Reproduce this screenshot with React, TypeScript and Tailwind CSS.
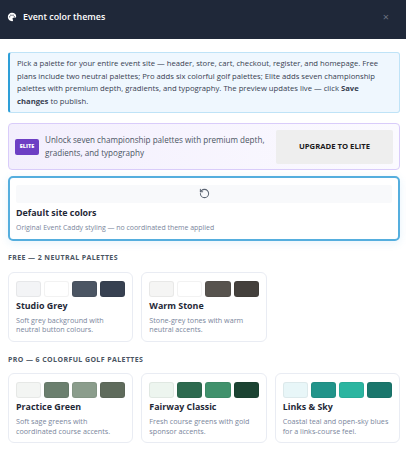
import React from "react";

const F = '[font-family:"Open_Sans","Noto_Sans",sans-serif]';

function Card({ name, desc, colors }: { name: string; desc: string; colors: string[] }) {
  return (
    <div className="h-[70px] rounded-[6px] border border-[#e9ecf3] bg-white px-[7px] pt-[8px]">
      <div className="grid grid-cols-4 gap-[3px]">
        {colors.map((c, i) => (
          <div key={i} className="h-[16px] rounded-[3px] border border-black/5" style={{ background: c }} />
        ))}
      </div>
      <div className="mt-[2px] text-[8.9px] leading-[14px] font-bold text-[#1f2937]">{name}</div>
      <div className="mt-[3px] text-[7.2px] leading-[9.6px] text-[#7a869c]">{desc}</div>
    </div>
  );
}

export default function App() {
  return (
    <div className={`w-[406px] h-[452px] overflow-hidden bg-white ${F}`}>
      <header className="h-[39px] bg-[#1f2839] flex items-center justify-between pl-[7px] pr-[17px] pb-[5px]">
        <div className="flex items-center gap-[6px]">
          <svg width="10" height="10" viewBox="0 0 24 24" fill="#fff">
            <path d="M12 2C6.5 2 2 6.5 2 12s4.5 10 10 10c1.4 0 2.5-1.1 2.5-2.5 0-.6-.2-1.2-.7-1.7-.4-.5-.6-1-.6-1.6 0-1.3 1-2.2 2.3-2.2H18c2.2 0 4-1.8 4-4C22 5.6 17.5 2 12 2zM6.5 13a1.5 1.5 0 1 1 0-3 1.5 1.5 0 0 1 0 3zm3-4a1.5 1.5 0 1 1 0-3 1.5 1.5 0 0 1 0 3zm5 0a1.5 1.5 0 1 1 0-3 1.5 1.5 0 0 1 0 3zm3 4a1.5 1.5 0 1 1 0-3 1.5 1.5 0 0 1 0 3z" />
          </svg>
          <span className="text-[8.9px] font-semibold text-white">Event color themes</span>
        </div>
        <span className="text-[11px] text-[#6b7280]">×</span>
      </header>
      <main className="pl-[8px] pr-[6px] pt-[12.5px]">
        <div className="rounded-[3px] border border-[#bfe3f7] border-l-[2px] border-l-[#2e9fd8] bg-[#eff7fe] pl-[7px] pr-[10px] py-[4.5px] text-[7.7px] leading-[12.7px] text-[#374151]">
          Pick a palette for your entire event site — header, store, cart, checkout, register, and homepage. Free plans include two neutral palettes; Pro adds six colorful golf palettes; Elite adds seven championship palettes with premium depth, gradients, and typography. The preview updates live — click <b>Save changes</b> to publish.
        </div>
        <div className="mt-[10px] h-[46.5px] rounded-[4px] border border-[#d9ccfa] bg-[linear-gradient(90deg,#f3effd,#fbfaff)] flex items-center px-[6px] gap-[6px]">
          <span className="w-[24px] h-[16px] shrink-0 rounded-[2px] bg-[#6d3fc4] text-white text-[5.5px] font-extrabold flex items-center justify-center">ELITE</span>
          <span className="flex-1 text-[8.1px] leading-[12.5px] text-[#4b5563]">Unlock seven championship palettes with premium depth, gradients, and typography</span>
          <span className="w-[117px] h-[34px] shrink-0 rounded-[2px] bg-[#eeeeee] text-[7.7px] font-bold text-[#1a1a1a] flex items-center justify-center">UPGRADE TO ELITE</span>
        </div>
        <div className="mt-[6.5px] h-[65px] rounded-[5px] border-2 border-[#55aede] bg-white px-[6px] pt-[6.5px] shadow-[0_2px_8px_rgba(56,160,220,0.12)]">
          <div className="h-[18px] rounded-[2px] bg-[#f8f9fb] flex items-center justify-center">
            <svg width="11" height="11" viewBox="0 0 24 24" fill="none" stroke="#5b6472" strokeWidth="2.2" strokeLinecap="round" strokeLinejoin="round">
              <path d="M3 12a9 9 0 1 0 9-9 9.75 9.75 0 0 0-6.74 2.74L3 8" />
              <path d="M3 3v5h5" />
            </svg>
          </div>
          <div className="mt-[3px] text-[8.9px] leading-[14px] font-bold text-[#1f2937]">Default site colors</div>
          <div className="mt-[3px] text-[6.95px] leading-[10px] text-[#7a869c]">Original Event Caddy styling — no coordinated theme applied</div>
        </div>
        <div className="mt-[12px] text-[7px] leading-[10px] font-bold tracking-[0.4px] text-[#4b5563]">FREE — 2 NEUTRAL PALETTES</div>
        <div className="mt-[8.4px] grid grid-cols-3 gap-[8px]">
          <Card name="Studio Grey" desc="Soft grey background with neutral button colours." colors={["#f3f4f6", "#ffffff", "#4b5563", "#374151"]} />
          <Card name="Warm Stone" desc="Stone-grey tones with warm neutral accents." colors={["#f5f5f4", "#ffffff", "#57534e", "#44403c"]} />
        </div>
        <div className="mt-[13.6px] text-[7px] leading-[10px] font-bold tracking-[0.4px] text-[#4b5563]">PRO — 6 COLORFUL GOLF PALETTES</div>
        <div className="mt-[8px] grid grid-cols-3 gap-[8px]">
          <Card name="Practice Green" desc="Soft sage greens with coordinated course accents." colors={["#f3f5f3", "#6b7f6e", "#8b9d8c", "#5f6b5c"]} />
          <Card name="Fairway Classic" desc="Fresh course greens with gold sponsor accents." colors={["#edf5ef", "#2d6a4f", "#40916c", "#1b4332"]} />
          <Card name="Links & Sky" desc="Coastal teal and open-sky blues for a links-course feel." colors={["#e8f6f8", "#21948a", "#2bb5a0", "#1a766c"]} />
        </div>
      </main>
    </div>
  );
}
